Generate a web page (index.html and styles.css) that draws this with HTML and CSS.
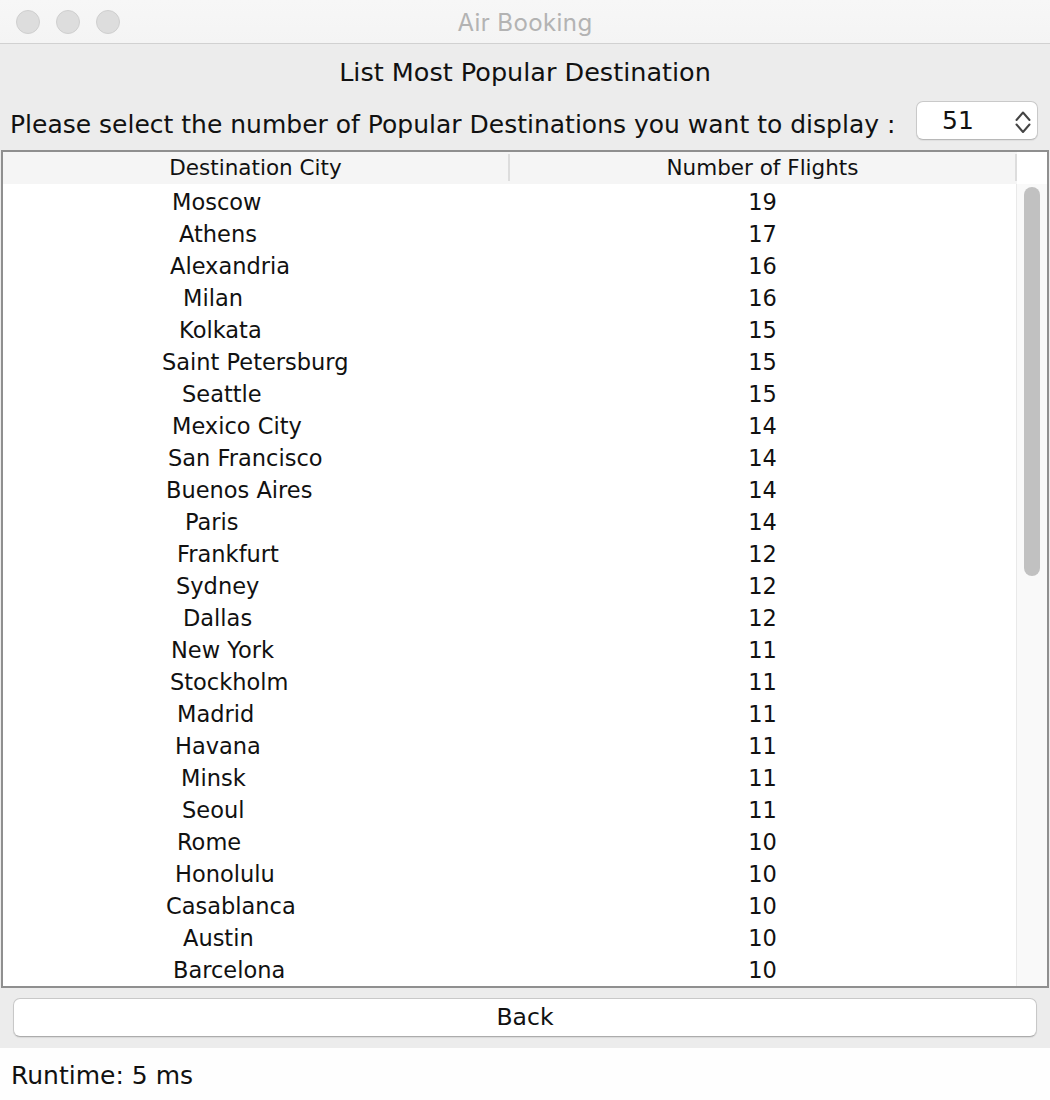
FILE: index.html
```html
<!DOCTYPE html>
<html>
<head>
<meta charset="utf-8">
<link rel="stylesheet" href="styles.css">
</head>
<body>
<div class="window">
  <div class="titlebar">
    <div class="lights"><span class="light"></span><span class="light"></span><span class="light"></span></div>
    <div class="title">Air Booking</div>
    <div></div>
  </div>
  <div class="heading">List Most Popular Destination</div>
  <div class="select-row">
    <span class="label">Please select the number of Popular Destinations you want to display :</span>
    <div class="spinner">
      <span class="spin-value">51</span>
      <svg class="spin-arrows" width="16" height="23" viewBox="0 0 16 23"><path d="M1.5 9 L8 1.5 L14.5 9" fill="none" stroke="#444" stroke-width="2" stroke-linecap="round" stroke-linejoin="round"/><path d="M1.5 13.5 L8 21 L14.5 13.5" fill="none" stroke="#444" stroke-width="2" stroke-linecap="round" stroke-linejoin="round"/></svg>
    </div>
  </div>
  <div class="table">
    <div class="thead">
      <div class="th th-sep">Destination City</div>
      <div class="th th-sep">Number of Flights</div>
      <div class="th-corner"></div>
    </div>
    <div class="tbody">
      <div class="rows">
        <div class="row"><div class="city" style="padding-left:169px">Moscow</div><div class="num">19</div></div>
        <div class="row"><div class="city" style="padding-left:176px">Athens</div><div class="num">17</div></div>
        <div class="row"><div class="city" style="padding-left:167px">Alexandria</div><div class="num">16</div></div>
        <div class="row"><div class="city" style="padding-left:180px">Milan</div><div class="num">16</div></div>
        <div class="row"><div class="city" style="padding-left:176px">Kolkata</div><div class="num">15</div></div>
        <div class="row"><div class="city" style="padding-left:159px">Saint Petersburg</div><div class="num">15</div></div>
        <div class="row"><div class="city" style="padding-left:179px">Seattle</div><div class="num">15</div></div>
        <div class="row"><div class="city" style="padding-left:169px">Mexico City</div><div class="num">14</div></div>
        <div class="row"><div class="city" style="padding-left:165px">San Francisco</div><div class="num">14</div></div>
        <div class="row"><div class="city" style="padding-left:163px">Buenos Aires</div><div class="num">14</div></div>
        <div class="row"><div class="city" style="padding-left:182px">Paris</div><div class="num">14</div></div>
        <div class="row"><div class="city" style="padding-left:174px">Frankfurt</div><div class="num">12</div></div>
        <div class="row"><div class="city" style="padding-left:173px">Sydney</div><div class="num">12</div></div>
        <div class="row"><div class="city" style="padding-left:180px">Dallas</div><div class="num">12</div></div>
        <div class="row"><div class="city" style="padding-left:168px">New York</div><div class="num">11</div></div>
        <div class="row"><div class="city" style="padding-left:167px">Stockholm</div><div class="num">11</div></div>
        <div class="row"><div class="city" style="padding-left:174px">Madrid</div><div class="num">11</div></div>
        <div class="row"><div class="city" style="padding-left:172px">Havana</div><div class="num">11</div></div>
        <div class="row"><div class="city" style="padding-left:178px">Minsk</div><div class="num">11</div></div>
        <div class="row"><div class="city" style="padding-left:179px">Seoul</div><div class="num">11</div></div>
        <div class="row"><div class="city" style="padding-left:174px">Rome</div><div class="num">10</div></div>
        <div class="row"><div class="city" style="padding-left:172px">Honolulu</div><div class="num">10</div></div>
        <div class="row"><div class="city" style="padding-left:163px">Casablanca</div><div class="num">10</div></div>
        <div class="row"><div class="city" style="padding-left:180px">Austin</div><div class="num">10</div></div>
        <div class="row"><div class="city" style="padding-left:170px">Barcelona</div><div class="num">10</div></div>
      </div>
      <div class="scrollbar"><div class="thumb"></div></div>
    </div>
  </div>
  <div class="button-row">
    <div class="button">Back</div>
  </div>
</div>
<div class="runtime">Runtime: 5 ms</div>
</body>
</html>
```

FILE: styles.css
```css
* { box-sizing: border-box; }
html, body { margin: 0; padding: 0; background: #fefefe; }
body {
  font-family: "DejaVu Sans", "Noto Sans", sans-serif;
  font-size: 25px;
  color: #111;
  width: 1050px;
}
.window {
  background: #ececec;
  height: 1048px;
  display: flex;
  flex-direction: column;
}
.titlebar {
  height: 44px;
  background: linear-gradient(#f7f7f7, #f4f4f4);
  border-bottom: 1px solid #d1d1d1;
  display: grid;
  grid-template-columns: 1fr auto 1fr;
  align-items: center;
}
.lights { display: flex; gap: 16px; padding-left: 16px; }
.light {
  width: 24px; height: 24px; border-radius: 50%;
  background: #dddddd;
  border: 1px solid #cfcfcf;
}
.title {
  font-family: "Inter", "Liberation Sans", sans-serif;
  font-size: 24px;
  letter-spacing: 0.4px;
  color: #b3b3b3;
  padding-top: 1px;
}
.heading {
  text-align: center;
  height: 54px;
  line-height: 56px;
  font-size: 25.5px;
}
.select-row {
  display: flex;
  align-items: center;
  justify-content: space-between;
  padding: 0 12px 0 10px;
  height: 52px;
}
.label { line-height: 30px; padding-top: 1px; }
.spinner {
  width: 122px; height: 39px;
  margin-bottom: 7px;
  background: #fff;
  border: 1px solid #c9c9c9;
  border-bottom-color: #b8b8b8;
  border-radius: 7px;
  display: flex;
  align-items: center;
  box-shadow: 0 1px 1px rgba(0,0,0,0.06);
}
.spin-value { flex: 1; text-align: center; padding-right: 16px; font-size: 25px; }
.spin-arrows { margin-right: 6px; margin-top: 3px; }
.table {
  margin-left: 1px;
  width: 1048px;
  height: 838px;
  border: 2px solid #8f8f8f;
  background: #fff;
  display: flex;
  flex-direction: column;
  overflow: hidden;
}
.thead {
  display: flex;
  height: 32px;
  background: #f5f5f5;
  flex: none;
}
.th {
  flex: 1;
  text-align: center;
  line-height: 32px;
  font-size: 21.5px;
}
.th-sep { border-right: 2px solid #dedede; }
.th-sep { border-image: linear-gradient(transparent 3px, #dddddd 3px, #dddddd 28px, transparent 28px) 1; }
.th-corner { width: 30px; background: #fff; }
.tbody {
  flex: 1;
  display: flex;
  min-height: 0;
}
.rows { flex: 1; padding-top: 2px; overflow: hidden; font-size: 22.5px; }
.row {
  display: flex;
  height: 32px;
  line-height: 32px;
}
.city { width: 506px; white-space: nowrap; }
.num { flex: 1; text-align: center; }
.scrollbar {
  width: 31px;
  background: #f9f9f9;
  border-left: 1px solid #e9e9e9;
  padding: 3px 6px 0 7px;
}
.thumb {
  width: 16px;
  height: 389px;
  background: #c1c1c1;
  border-radius: 8px;
}
.button-row { padding: 10px 13px 0 13px; }
.button {
  height: 39px;
  background: #fff;
  border: 1px solid #c8c8c8;
  border-bottom-color: #acacac;
  border-radius: 7px;
  text-align: center;
  line-height: 37px;
  font-size: 23.5px;
  box-shadow: 0 1px 1px rgba(0,0,0,0.08);
}
.runtime {
  padding-left: 11px;
  height: 52px;
  line-height: 56px;
}
```
